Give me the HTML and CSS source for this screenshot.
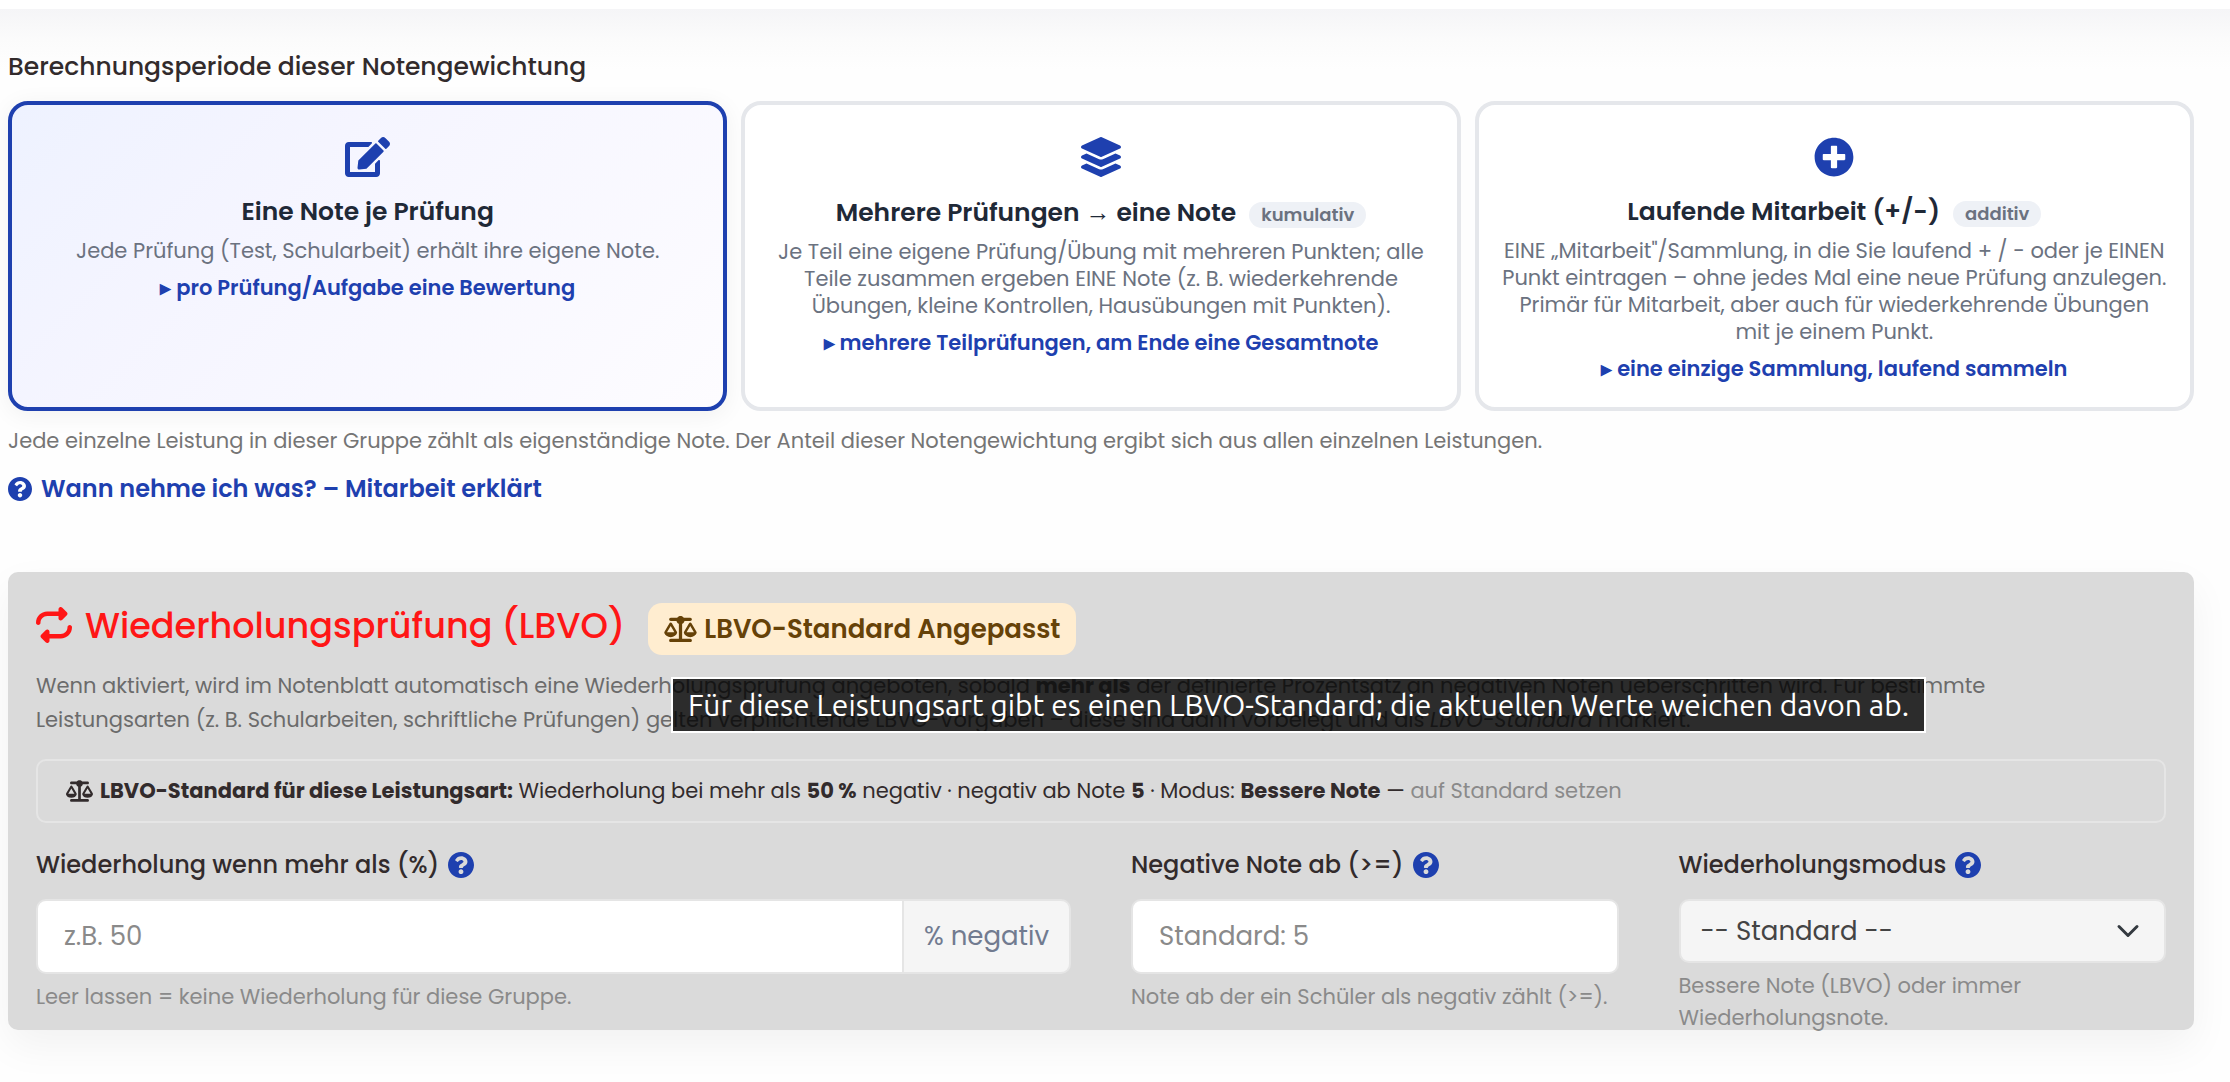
FILE: index.html
```html
<!DOCTYPE html>
<html lang="de">
<head>
<meta charset="utf-8">
<meta name="viewport" content="width=device-width, initial-scale=1">
<title>Notengewichtung</title>
<link rel="stylesheet" href="styles.css">
</head>
<body>
<svg class="sprite" aria-hidden="true">
  <symbol id="i-question" viewBox="8 8 496 496"><path d="M504 256c0 136.997-111.043 248-248 248S8 392.997 8 256C8 119.083 119.043 8 256 8s248 111.083 248 248zM262.655 90c-54.497 0-89.255 22.957-116.549 63.758-3.536 5.286-2.353 12.415 2.715 16.258l34.699 26.31c5.205 3.947 12.621 3.008 16.665-2.122 17.864-22.658 30.113-35.797 57.303-35.797 20.429 0 45.698 13.148 45.698 32.958 0 14.976-12.363 22.667-32.534 33.976C247.128 238.528 216 254.941 216 296v4c0 6.627 5.373 12 12 12h56c6.627 0 12-5.373 12-12v-1.333c0-28.462 83.186-29.647 83.186-106.667 0-58.002-60.165-102-116.531-102zM256 338c-25.365 0-46 20.635-46 46 0 25.364 20.635 46 46 46s46-20.636 46-46c0-25.364-20.635-46-46-46z"/></symbol>
  <symbol id="i-scale" viewBox="0 0 640 512"><path d="M384 32H512c17.7 0 32 14.3 32 32s-14.3 32-32 32H398.4c-5.2 25.8-22.9 47.1-46.4 57.3V448H512c17.7 0 32 14.3 32 32s-14.3 32-32 32H320 128c-17.7 0-32-14.3-32-32s14.3-32 32-32H288V153.3c-23.5-10.3-41.2-31.6-46.4-57.3H128c-17.7 0-32-14.3-32-32s14.3-32 32-32H256c14.6-19.4 37.8-32 64-32s49.4 12.6 64 32zm55.6 288H584.4L512 195.8 439.6 320zM512 416c-62.9 0-115.2-34-126-78.9c-2.6-11 1-22.3 6.7-32.1l95.2-163.2c5-8.6 14.2-13.8 24.1-13.8s19.1 5.3 24.1 13.8l95.2 163.2c5.7 9.8 9.3 21.1 6.7 32.1C627.2 382 574.9 416 512 416zM126.8 195.8L54.4 320H199.3L126.8 195.8zM.9 337.1c-2.6-11 1-22.3 6.7-32.1l95.2-163.2c5-8.6 14.2-13.8 24.1-13.8s19.1 5.3 24.1 13.8l95.2 163.2c5.7 9.8 9.3 21.1 6.7 32.1C242 382 189.7 416 126.8 416S11.7 382 .9 337.1z"/></symbol>
</svg>

<header class="topbar"></header>

<main class="page">
  <fieldset class="period">
    <legend class="section-label">Berechnungsperiode dieser Notengewichtung</legend>
    <div class="cards">
      <label class="card">
        <input class="card-radio" type="radio" name="period" checked>
        <svg class="card-icon" viewBox="0 0 576 512" aria-hidden="true"><path d="M402.6 83.2l90.2 90.2c3.8 3.8 3.8 10 0 13.8L274.4 405.6l-92.8 10.3c-12.4 1.4-22.9-9.1-21.5-21.5l10.3-92.8L388.8 83.2c3.8-3.8 10-3.8 13.8 0zm162-22.9l-48.8-48.8c-15.2-15.2-39.9-15.2-55.2 0l-35.4 35.4c-3.8 3.8-3.8 10 0 13.8l90.2 90.2c3.8 3.8 10 3.8 13.8 0l35.4-35.4c15.2-15.3 15.2-40 0-55.2zM384 346.2V448H64V128h229.8c3.2 0 6.2-1.3 8.5-3.5l40-40c7.6-7.6 2.2-20.5-8.5-20.5H48C21.5 64 0 85.5 0 112v352c0 26.5 21.5 48 48 48h352c26.5 0 48-21.5 48-48V306.2c0-10.7-12.9-16-20.5-8.5l-40 40c-2.2 2.3-3.5 5.3-3.5 8.5z"/></svg>
        <span class="card-title">Eine Note je Prüfung</span>
        <span class="card-text">Jede Prüfung (Test, Schularbeit) erhält ihre eigene Note.</span>
        <span class="card-hint">▸ pro Prüfung/Aufgabe eine Bewertung</span>
      </label>
      <label class="card">
        <input class="card-radio" type="radio" name="period">
        <svg class="card-icon" viewBox="0 0 512 512" aria-hidden="true"><path d="M12.41 148.02l232.94 105.67c6.8 3.09 14.49 3.09 21.29 0l232.94-105.67c16.55-7.51 16.55-32.52 0-40.03L266.65 2.31a25.607 25.607 0 0 0-21.29 0L12.41 107.98c-16.55 7.51-16.55 32.53 0 40.04zm487.18 88.28l-58.09-26.33-161.64 73.27c-7.56 3.43-15.59 5.17-23.86 5.17s-16.29-1.74-23.86-5.17L70.51 209.97l-58.1 26.33c-16.55 7.5-16.55 32.5 0 40l232.94 105.59c6.8 3.08 14.49 3.08 21.29 0L499.59 276.3c16.55-7.5 16.55-32.5 0-40zm0 127.8l-57.87-26.23-161.86 73.37c-7.56 3.43-15.59 5.17-23.86 5.17s-16.29-1.74-23.86-5.17L70.29 337.87 12.41 364.1c-16.55 7.5-16.55 32.5 0 40l232.94 105.59c6.8 3.08 14.49 3.08 21.29 0L499.59 404.1c16.55-7.5 16.55-32.5 0-40z"/></svg>
        <span class="card-title">Mehrere Prüfungen <span class="arrow">→</span> eine Note <span class="pill">kumulativ</span></span>
        <span class="card-text">Je Teil eine eigene Prüfung/Übung mit mehreren Punkten; alle Teile zusammen ergeben EINE Note (z. B. wiederkehrende Übungen, kleine Kontrollen, Hausübungen mit Punkten).</span>
        <span class="card-hint">▸ mehrere Teilprüfungen, am Ende eine Gesamtnote</span>
      </label>
      <label class="card">
        <input class="card-radio" type="radio" name="period">
        <svg class="card-icon" viewBox="0 0 512 512" aria-hidden="true"><path d="M256 8C119 8 8 119 8 256s111 248 248 248 248-111 248-248S393 8 256 8zm144 276c0 6.600-5.400 12-12 12h-92v92c0 6.600-5.400 12-12 12h-56c-6.600 0-12-5.400-12-12v-92h-92c-6.600 0-12-5.400-12-12v-56c0-6.600 5.400-12 12-12h92v-92c0-6.600 5.400-12 12-12h56c6.600 0 12 5.400 12 12v92h92c6.600 0 12 5.400 12 12v56z"/></svg>
        <span class="card-title">Laufende Mitarbeit (+/-) <span class="pill">additiv</span></span>
        <span class="card-text">EINE „Mitarbeit"/Sammlung, in die Sie laufend + / - oder je EINEN Punkt eintragen – ohne jedes Mal eine neue Prüfung anzulegen. Primär für Mitarbeit, aber auch für wiederkehrende Übungen mit je einem Punkt.</span>
        <span class="card-hint">▸ eine einzige Sammlung, laufend sammeln</span>
      </label>
    </div>
  </fieldset>
  <p class="period-help">Jede einzelne Leistung in dieser Gruppe zählt als eigenständige Note. Der Anteil dieser Notengewichtung ergibt sich aus allen einzelnen Leistungen.</p>
  <a class="explain" href="#mitarbeit"><svg class="explain-icon" aria-hidden="true"><use href="#i-question"/></svg>Wann nehme ich was? – Mitarbeit erklärt</a>

  <section class="panel">
    <div class="panel-head">
      <svg class="repeat-icon" viewBox="0 0 512 512" aria-hidden="true"><path d="M0 224c0 17.700 14.300 32 32 32s32-14.300 32-32c0-53 43-96 96-96H320v32c0 12.900 7.800 24.600 19.800 29.600s25.700 2.200 34.900-6.900l64-64c12.500-12.500 12.500-32.800 0-45.300l-64-64c-9.200-9.200-22.900-11.900-34.900-6.900S320 19.100 320 32V64H160C71.600 64 0 135.600 0 224zm512 64c0-17.700-14.300-32-32-32s-32 14.300-32 32c0 53-43 96-96 96H192V352c0-12.900-7.800-24.600-19.800-29.600s-25.700-2.200-34.900 6.900l-64 64c-12.500 12.500-12.500 32.800 0 45.300l64 64c9.200 9.200 22.900 11.900 34.900 6.900s19.800-16.600 19.800-29.600V448H352c88.400 0 160-71.600 160-160z"/></svg>
      <h2 class="panel-title">Wiederholungsprüfung (LBVO)</h2>
      <span class="badge"><svg class="badge-icon" aria-hidden="true"><use href="#i-scale"/></svg>LBVO-Standard Angepasst</span>
    </div>
    <div class="intro">
      <p class="intro-text">Wenn aktiviert, wird im Notenblatt automatisch eine Wiederholungsprüfung angeboten, sobald <strong>mehr als</strong> der definierte Prozentsatz an negativen Noten ueberschritten wird. Für bestimmte Leistungsarten (z. B. Schularbeiten, schriftliche Prüfungen) gelten verpflichtende LBVO-Vorgaben – diese sind dann vorbelegt und als <em>LBVO-Standard</em> markiert.</p>
      <div class="tooltip" role="tooltip">Für diese Leistungsart gibt es einen LBVO-Standard; die aktuellen Werte weichen davon ab.</div>
    </div>
    <div class="standard">
      <svg class="standard-icon" aria-hidden="true"><use href="#i-scale"/></svg>
      <p class="standard-text"><strong>LBVO-Standard für diese Leistungsart:</strong> Wiederholung bei mehr als <strong>50 %</strong> negativ · negativ ab Note <strong>5</strong> · Modus: <strong>Bessere Note</strong> — <a class="reset" href="#standard">auf Standard setzen</a></p>
    </div>
    <div class="fields">
      <div class="field field-wide">
        <div class="field-head"><label for="limit">Wiederholung wenn mehr als (%)</label><svg class="help-icon" aria-hidden="true"><use href="#i-question"/></svg></div>
        <div class="group">
          <input class="control group-input" id="limit" type="text" placeholder="z.B. 50">
          <span class="addon">% negativ</span>
        </div>
        <p class="field-help">Leer lassen = keine Wiederholung für diese Gruppe.</p>
      </div>
      <div class="field">
        <div class="field-head"><label for="negative">Negative Note ab (&gt;=)</label><svg class="help-icon" aria-hidden="true"><use href="#i-question"/></svg></div>
        <input class="control" id="negative" type="text" placeholder="Standard: 5">
        <p class="field-help field-help-line">Note ab der ein Schüler als negativ zählt (&gt;=).</p>
      </div>
      <div class="field">
        <div class="field-head"><label for="mode">Wiederholungsmodus</label><svg class="help-icon" aria-hidden="true"><use href="#i-question"/></svg></div>
        <div class="select-wrap">
          <select class="select" id="mode"><option>-- Standard --</option><option>Bessere Note (LBVO)</option><option>Wiederholungsnote</option></select>
          <svg class="chevron" viewBox="0 0 16 16" aria-hidden="true"><path d="m2 5 6 6 6-6"/></svg>
        </div>
        <p class="field-help">Bessere Note (LBVO) oder immer Wiederholungsnote.</p>
      </div>
    </div>
  </section>
</main>
</body>
</html>
```
FILE: styles.css
```css
:root {
  --blue: #1e40af;
  --ink: #322b2c;
  --line: #e5e5e5;
}

* { box-sizing: border-box; }

body {
  margin: 0;
  background: #fefefe;
  color: var(--ink);
  font-family: Poppins, Inter, sans-serif;
  font-size: 21px;
}

p, h2, fieldset { margin: 0; padding: 0; border: 0; }
svg { flex: none; fill: currentColor; }
.sprite { display: none; }

.topbar { height: 9px; background: #fff; }

.page {
  padding: 40px 36px 50px 8px;
  background: linear-gradient(#f5f5f7, #fbfbfb 30px, #fefefe 60px);
}

/* Period cards */
.period { min-width: 0; }
.section-label {
  padding: 0;
  margin-bottom: 16px;
  font-size: 25px;
  font-weight: 500;
  line-height: 36px;
}
.cards {
  display: grid;
  grid-template-columns: repeat(3, minmax(0, 1fr));
  gap: 14px;
}
.card {
  position: relative;
  display: flex;
  flex-direction: column;
  align-items: center;
  padding: 32px 22px 23px;
  border: 4px solid #e5e7eb;
  border-radius: 20px;
  background: #fff;
  text-align: center;
  cursor: pointer;
}
.card:has(:checked) {
  border-color: var(--blue);
  background: linear-gradient(135deg, #eef2ff, #f5f5ff 35%, #fdfcff);
  box-shadow: 0 4px 24px rgba(0, 0, 0, .06);
}
.card-radio { position: absolute; opacity: 0; }
.card-icon { height: 40px; margin-bottom: 16px; color: var(--blue); }
.card-title {
  margin-bottom: 6px;
  color: #1f2937;
  font-size: 25px;
  font-weight: 600;
  line-height: 38px;
}
.arrow { font-family: "Liberation Sans", sans-serif; font-weight: 400; }
.pill {
  display: inline-block;
  margin-left: 7px;
  padding: 0 12px;
  border-radius: 13px;
  background: #eef1f6;
  color: #6b7280;
  font-size: 18px;
  line-height: 26px;
}
.card-text { color: #6b7280; line-height: 27px; }
.card-hint {
  margin-top: 9px;
  color: var(--blue);
  font-weight: 600;
  line-height: 30px;
}
.period-help { margin-top: 13px; color: #757575; line-height: 34px; }
.explain {
  display: flex;
  align-items: center;
  gap: 9px;
  width: fit-content;
  margin-top: 13px;
  color: var(--blue);
  font-size: 24px;
  font-weight: 600;
  line-height: 36px;
  text-decoration: none;
}
.explain-icon { width: 24px; height: 24px; }

/* Repeat exam panel */
.panel {
  display: flow-root;
  margin-top: 65px;
  padding: 31px 28px 0;
  border-radius: 10px;
  background: #dadada;
  box-shadow: 0 16px 40px rgba(0, 0, 0, .05);
}
.panel-head { display: flex; align-items: flex-start; }
.repeat-icon { width: 36px; height: 36px; margin-top: 4px; color: #ff1616; }
.panel-title {
  margin: 0 23px 0 13px;
  color: #ff1616;
  font-size: 35px;
  font-weight: 500;
  line-height: 46px;
}
.badge {
  display: flex;
  align-items: center;
  gap: 7px;
  padding: 0 16px;
  border-radius: 14px;
  background: #ffedd0;
  color: #664208;
  font-size: 26px;
  font-weight: 600;
  line-height: 52px;
}
.badge-icon { width: 33px; height: 26px; }
.intro { position: relative; margin-top: 14px; }
.intro-text { padding-right: 60px; color: #6b6b6b; line-height: 34px; }
.tooltip {
  position: absolute;
  top: 8px;
  left: 635px;
  padding: 0 15px;
  border: 2px solid #fff;
  background: rgba(0, 0, 0, .8);
  background-clip: padding-box;
  color: #fff;
  font-family: Ubuntu, "Noto Sans", sans-serif;
  font-size: 30px;
  line-height: 52px;
  white-space: nowrap;
}
.standard {
  display: flex;
  align-items: center;
  gap: 7px;
  margin-top: 22px;
  padding: 13px 28px;
  border: 2px solid var(--line);
  border-radius: 10px;
}
.standard-icon { width: 27px; height: 22px; }
.standard-text { line-height: 34px; }
.reset { color: #8a8a8a; text-decoration: none; }

/* Fields */
.fields {
  display: grid;
  grid-template-columns: repeat(4, minmax(0, 1fr));
  column-gap: 60px;
  margin: 24px 0 -4px;
}
.field-wide { grid-column: span 2; }
.field-head {
  display: flex;
  align-items: center;
  gap: 9px;
  margin-bottom: 16px;
  font-size: 24px;
  font-weight: 500;
  line-height: 36px;
}
.help-icon { width: 26px; height: 26px; color: var(--blue); }
.group { display: flex; }
.control, .select {
  display: block;
  width: 100%;
  border: 2px solid var(--line);
  border-radius: 10px;
  font-family: inherit;
  font-size: 26px;
}
.control { height: 75px; padding: 0 26px; background: #fff; color: var(--ink); }
.control::placeholder { color: #8a8a8a; opacity: 1; }
.group-input {
  flex: 1;
  min-width: 0;
  border-radius: 10px 0 0 10px;
}
.addon {
  display: flex;
  align-items: center;
  padding: 0 20px;
  border: 2px solid var(--line);
  border-left: 0;
  border-radius: 0 10px 10px 0;
  background: #f5f5f5;
  color: #717b90;
  font-size: 26px;
}
.select-wrap { position: relative; }
.select {
  height: 64px;
  padding: 0 60px 0 20px;
  appearance: none;
  background: #f5f5f5;
  color: #444;
}
.chevron {
  position: absolute;
  top: 20px;
  right: 26px;
  width: 24px;
  height: 24px;
  fill: none;
  stroke: #343a40;
  stroke-width: 2;
  stroke-linecap: round;
  stroke-linejoin: round;
  pointer-events: none;
}
.field-help { margin-top: 7px; color: #8a8a8a; line-height: 32px; }
.field-help-line { white-space: nowrap; }
```
